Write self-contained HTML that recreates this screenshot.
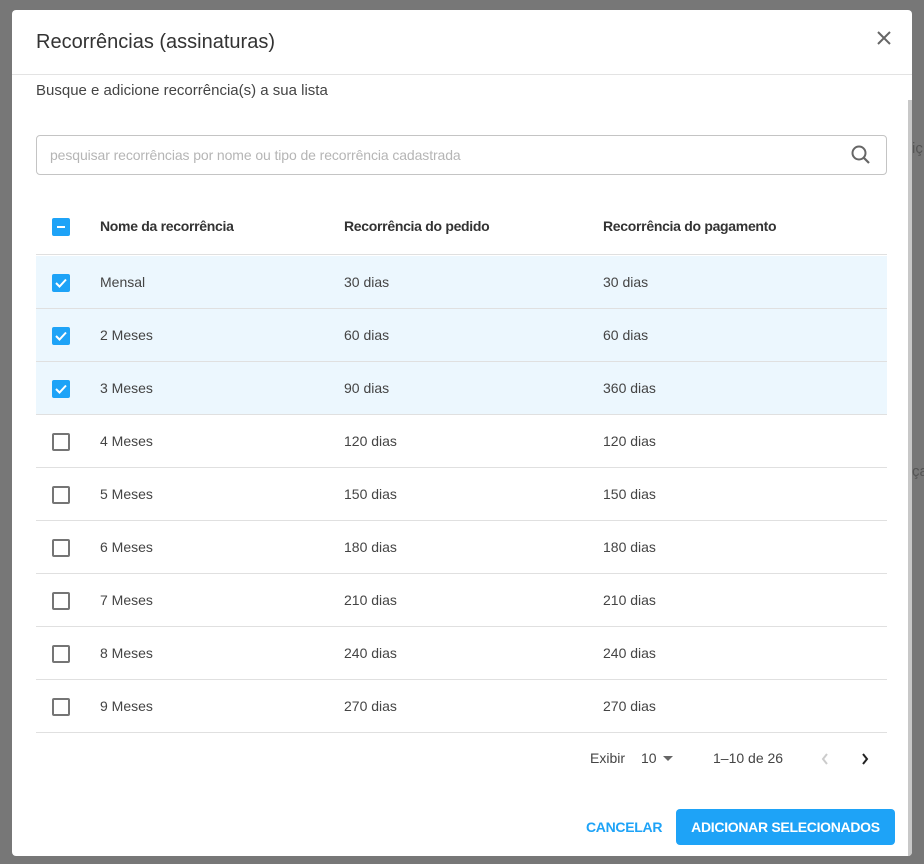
<!DOCTYPE html>
<html><head><meta charset="utf-8"><style>
*{box-sizing:border-box;margin:0;padding:0}
body{width:924px;height:864px;background:#777;font-family:"Liberation Sans",Arial,sans-serif;position:relative;overflow:hidden;color:#333}
.bg1{position:absolute;left:912px;top:140px;color:#555;font-size:15px}
.m{position:absolute;left:12px;top:10px;width:900px;height:846px;background:#fff;border-radius:4px;overflow:hidden}
.t{position:absolute;left:24px;top:21px;font-size:20px;color:#333}
.x{position:absolute;left:864px;top:20px}
.hl{position:absolute;left:0;top:64px;width:900px;height:1px;background:#e3e3e3}
.sb{position:absolute;left:896px;top:90px;width:4px;height:756px;background:#c8c8c8}
.sub{position:absolute;left:24px;top:72px;font-size:15px;color:#444}
.in{position:absolute;left:24px;top:125px;width:851px;height:40px;border:1px solid #c4c4c4;border-radius:4px}
.in span{position:absolute;left:13px;top:11px;font-size:14px;color:#b5b5b5;letter-spacing:-0.1px}
.in svg{position:absolute;left:813px;top:8px}
.row{position:absolute;left:24px;width:851px;height:53px;border-bottom:1px solid #e0e0e0;font-size:14px;color:#444}
.row.s{background:#ecf7fe}
.row div{position:absolute;top:18px}
.c1{left:64px}.c2{left:308px}.c3{left:567px}
.cb{position:absolute;left:16px;top:18px;width:18px;height:18px;border:2px solid #757575;border-radius:2px}
.cb.on{background:#1ea3f7;border-color:#1ea3f7}
.h{font-weight:bold;color:#333;font-size:14px;letter-spacing:-0.3px}
.ft{position:absolute;top:740px;font-size:14px;color:#444}
.btn{position:absolute;left:664px;top:799px;width:219px;height:36px;background:#1ea3f7;border-radius:4px;color:#fff;font-weight:bold;font-size:14px;text-align:center;line-height:36px;letter-spacing:-0.3px}
.can{position:absolute;left:574px;top:809px;color:#1ea3f7;font-weight:bold;font-size:14px;letter-spacing:-0.3px}
</style></head><body>
<div class="bg1">iç</div><div class="bg1" style="top:463px">ça</div>
<div class="m">
<div class="t">Recorrências (assinaturas)</div>
<svg class="x" width="16" height="16" viewBox="0 0 16 16"><path d="M2 2L14 14M14 2L2 14" stroke="#666" stroke-width="2"/></svg>
<div class="hl"></div><div class="sb"></div>
<div class="sub">Busque e adicione recorrência(s) a sua lista</div>
<div class="in"><span>pesquisar recorrências por nome ou tipo de recorrência cadastrada</span>
<svg width="22" height="22" viewBox="0 0 22 22"><circle cx="9" cy="9" r="6.5" fill="none" stroke="#666" stroke-width="2"/><path d="M13.5 13.5L19 19" stroke="#666" stroke-width="2.2"/></svg></div>

<div class="row h" style="top:191px;height:54px"><span class="cb on" style="top:17px"><svg width="14" height="14" style="position:absolute;left:0;top:0"><path d="M3 7H11" stroke="#fff" stroke-width="2"/></svg></span><div class="c1" style="top:17px">Nome da recorrência</div><div class="c2" style="top:17px">Recorrência do pedido</div><div class="c3" style="top:17px">Recorrência do pagamento</div></div>

<div class="row s" style="top:246px"><span class="cb on"><svg width="14" height="14" style="position:absolute;left:0;top:0"><path d="M2 7L5.5 10.5L12 3.5" stroke="#fff" stroke-width="2" fill="none"/></svg></span><div class="c1">Mensal</div><div class="c2">30 dias</div><div class="c3">30 dias</div></div>
<div class="row s" style="top:299px"><span class="cb on"><svg width="14" height="14" style="position:absolute;left:0;top:0"><path d="M2 7L5.5 10.5L12 3.5" stroke="#fff" stroke-width="2" fill="none"/></svg></span><div class="c1">2 Meses</div><div class="c2">60 dias</div><div class="c3">60 dias</div></div>
<div class="row s" style="top:352px"><span class="cb on"><svg width="14" height="14" style="position:absolute;left:0;top:0"><path d="M2 7L5.5 10.5L12 3.5" stroke="#fff" stroke-width="2" fill="none"/></svg></span><div class="c1">3 Meses</div><div class="c2">90 dias</div><div class="c3">360 dias</div></div>
<div class="row" style="top:405px"><span class="cb"></span><div class="c1">4 Meses</div><div class="c2">120 dias</div><div class="c3">120 dias</div></div>
<div class="row" style="top:458px"><span class="cb"></span><div class="c1">5 Meses</div><div class="c2">150 dias</div><div class="c3">150 dias</div></div>
<div class="row" style="top:511px"><span class="cb"></span><div class="c1">6 Meses</div><div class="c2">180 dias</div><div class="c3">180 dias</div></div>
<div class="row" style="top:564px"><span class="cb"></span><div class="c1">7 Meses</div><div class="c2">210 dias</div><div class="c3">210 dias</div></div>
<div class="row" style="top:617px"><span class="cb"></span><div class="c1">8 Meses</div><div class="c2">240 dias</div><div class="c3">240 dias</div></div>
<div class="row" style="top:670px"><span class="cb"></span><div class="c1">9 Meses</div><div class="c2">270 dias</div><div class="c3">270 dias</div></div>

<div class="ft" style="left:578px">Exibir</div>
<div class="ft" style="left:629px">10</div>
<svg style="position:absolute;left:651px;top:746px" width="12" height="6"><path d="M0 0H10L5 5Z" fill="#666"/></svg>
<div class="ft" style="left:701px">1–10 de 26</div>
<svg style="position:absolute;left:808px;top:742px" width="10" height="14"><path d="M7 2L3 7L7 12" stroke="#ccc" stroke-width="2" fill="none"/></svg>
<svg style="position:absolute;left:848px;top:742px" width="10" height="14"><path d="M3 2L7 7L3 12" stroke="#222" stroke-width="2" fill="none"/></svg>
<div class="can">CANCELAR</div>
<div class="btn">ADICIONAR SELECIONADOS</div>
</div>
</body></html>
